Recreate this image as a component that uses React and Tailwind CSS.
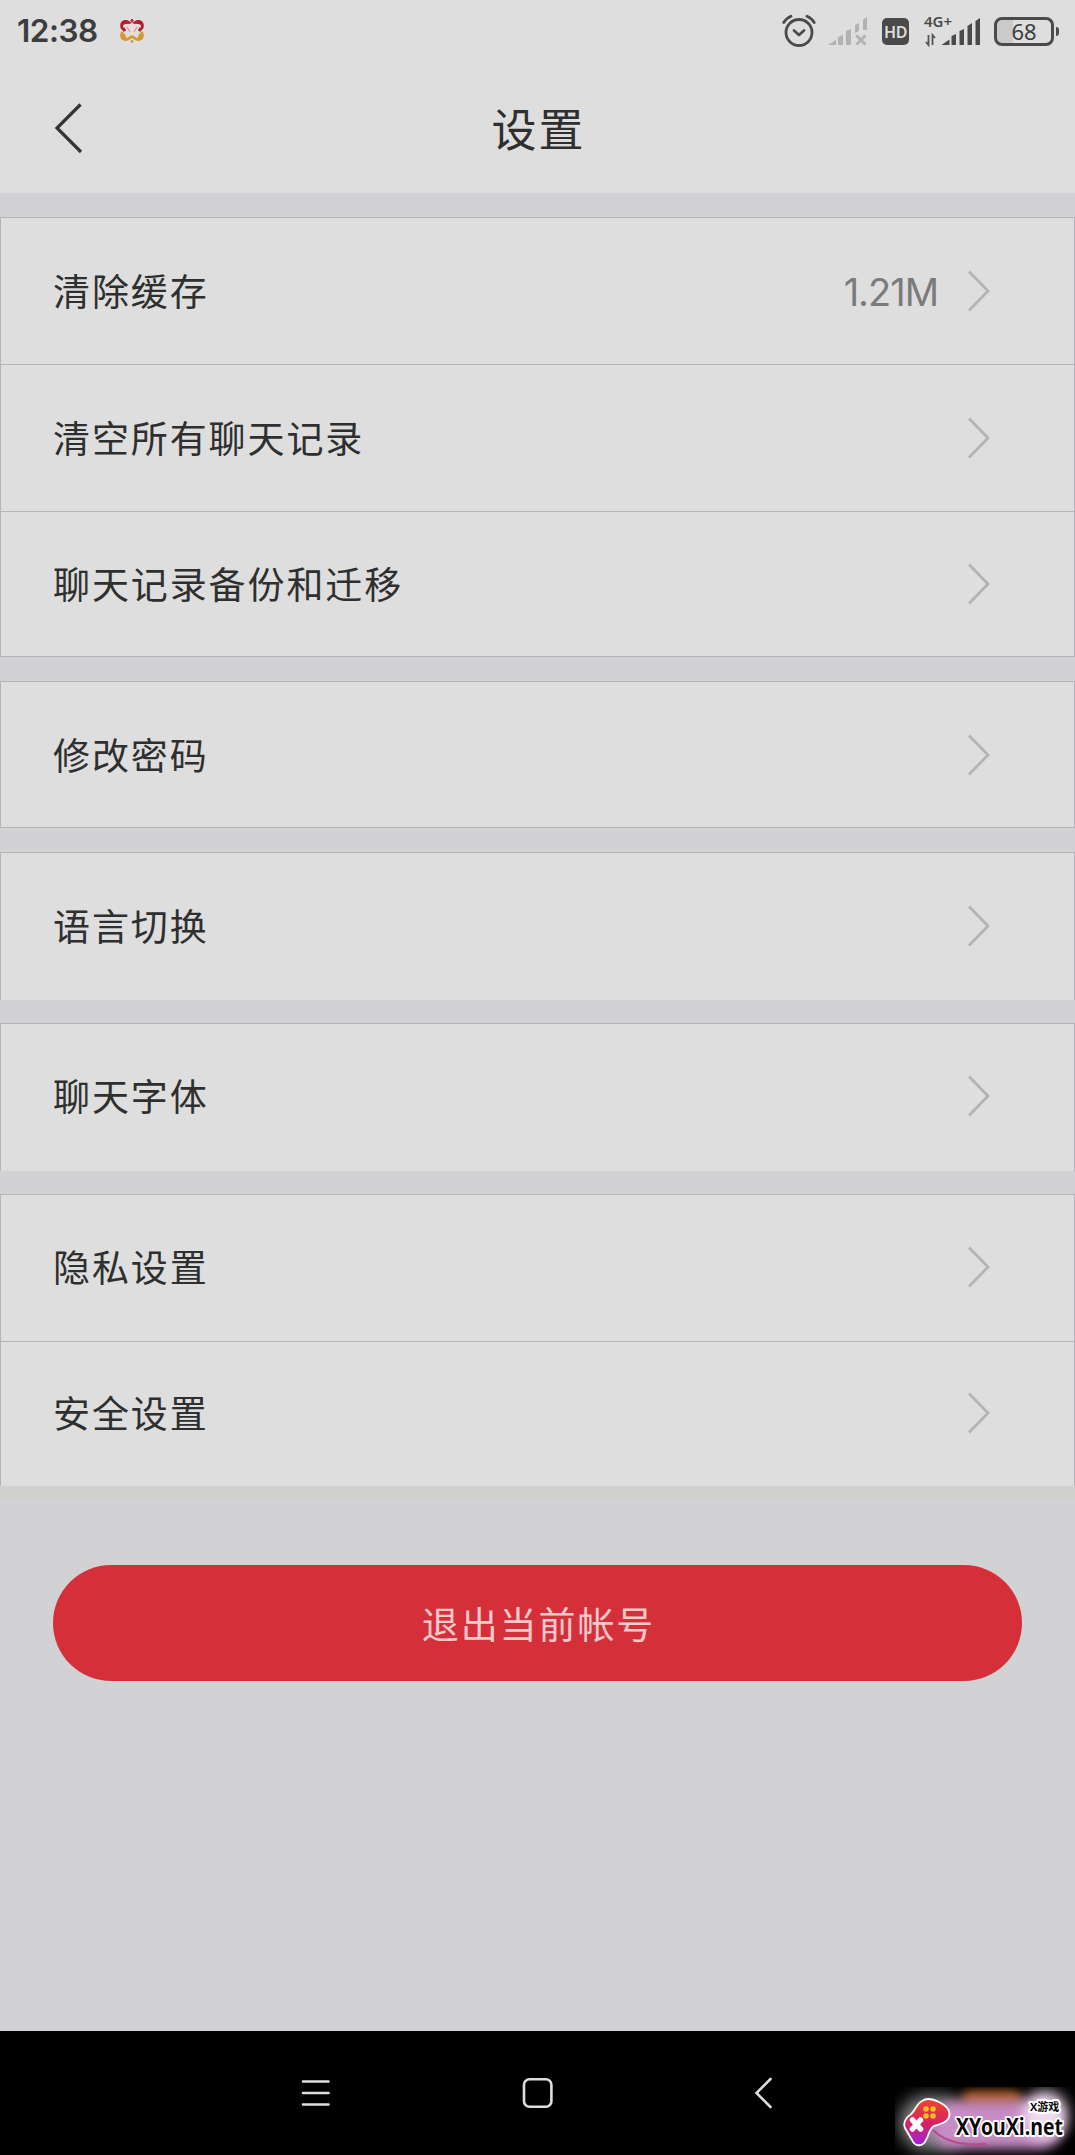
import React from 'react';

const groups = [
    {
        height: 'h-[440px]',
        gap: 'mt-6',
        border: 'border-y',
        rows: [
            { label: '清除缓存', value: '1.21M', size: 'h-[146px]' },
            { label: '清空所有聊天记录', size: 'h-[147px]' },
            { label: '聊天记录备份和迁移', size: 'flex-1' },
        ],
    },
    { height: 'h-[147px]', gap: 'mt-6', border: 'border-y', rows: [{ label: '修改密码', size: 'flex-1' }] },
    { height: 'h-[148px]', gap: 'mt-6', border: 'border-t', rows: [{ label: '语言切换', size: 'h-[145px]' }] },
    { height: 'h-[148px]', gap: 'mt-[23px]', border: 'border-t', rows: [{ label: '聊天字体', size: 'h-[143px]' }] },
    {
        height: 'h-[292px]',
        gap: 'mt-[23px]',
        border: 'border-t',
        rows: [
            { label: '隐私设置', size: 'flex-1 pb-[2px]' },
            { label: '安全设置', size: 'flex-1 pb-px' },
        ],
    },
];

const AppBadge = () => (
    <svg width="26" height="24" viewBox="0 0 26 24" fill="none">
        <path d="M2 10C-1 3 5-1 10 2l3 2 3-2c5-3 11 1 8 8l-3 2 1-5c-1-3-5-3-7-1l-2 2-2-2C9 4 5 4 4 7l1 5z" fill="#b51f2c" />
        <path d="M2 13c-3 7 3 11 8 8l3-2 3 2c5 3 11-1 8-8l-3-1 1 4c-1 3-5 4-7 1l-2-2-2 2c-2 3-6 2-7-1l1-4z" fill="#d29a35" />
        <path d="M13 4C9 5 5 8 8 12l5 5 5-5c3-4-1-7-5-8z" fill="#ecdcda" />
        <path d="M4 4l5-1M22 4l-5-1M4 9l2 3M22 9l-2 3" stroke="#b51f2c" strokeWidth="3" />
        <path d="M4 15l2 4M22 15l-2 4" stroke="#d29a35" strokeWidth="3" />
        <path d="M8 8l3 5M18 8l-3 5" stroke="#d79291" strokeWidth="1.2" />
        <circle cx="13" cy="1.5" r="1.5" fill="#b51f2c" />
        <circle cx="13" cy="22.5" r="1.4" fill="#d29a35" />
    </svg>
);

const AlarmIcon = () => (
    <svg width="34" height="34" viewBox="0 0 34 34" fill="none" stroke="#4b4b4b" strokeWidth="2.8" strokeLinecap="round">
        <circle cx="17" cy="18.5" r="13" />
        <path d="M1.8 8.5Q4 4.5 9 2.3M32.2 8.5Q30 4.5 25 2.3" />
        <path d="M12 16.5l5 4.5 5-4.5" strokeLinejoin="round" />
    </svg>
);

const WeakSignal = () => (
    <svg width="40" height="29" viewBox="0 0 40 29" fill="#b2b2b2">
        <path d="M0 28l8-5v5zM10 20l5-2v10h-5zM18 14l5-2v16h-5zM27 8l4-2v8l-4 2zM35 3l4-3v13h-4z" />
        <path d="M28.5 18.5l9 9M37.5 18.5l-9 9" stroke="#b2b2b2" strokeWidth="3" />
    </svg>
);

const Signal = () => (
    <svg width="57" height="31" viewBox="0 0 57 31" fill="#4a4a4a">
        <path d="M5.5 18v10l-2.5-3M9.5 28V18l2.5 3" stroke="#555" strokeWidth="1.8" fill="none" />
        <path d="M18.5 28l8-5.5V28zM28.5 19l4.500-2v11h-4.500zM36.500 14l4.500-2v16h-4.500zM44.500 9l4.500-3v22h-4.500zM52.500 4l4.500-3v27h-4.500z" />
    </svg>
);

const StatusBar = () => (
    <div className="flex h-16 items-start justify-between pl-[17px] pr-4">
        <div className="flex items-center pt-[11px]">
            <span className="w-[102px] text-[31.5px] leading-10 font-semibold tracking-[-0.5px] text-[#3d3d3d]">12:38</span>
            <AppBadge />
        </div>
        <div className="flex items-start">
            <div className="mt-[14px] mr-3"><AlarmIcon /></div>
            <div className="mt-[17px] mr-[14px]"><WeakSignal /></div>
            <span className="mt-[18px] mr-[14px] flex h-[27px] w-[27px] items-center justify-center rounded-[5px] bg-[#4a4a4a] font-['Noto_Sans'] text-[16px] font-semibold tracking-[-0.5px] text-[#dedede]">
                HD
            </span>
            <div className="relative mt-[17px] mr-[14px]">
                <Signal />
                <span className="absolute -top-[3px] left-px font-['Noto_Sans'] text-[15px] leading-[14px] font-semibold text-[#4a4a4a]">
                    4G+
                </span>
            </div>
            <div className="mt-[17px] flex items-center">
                <div className="flex h-[29px] w-[60px] items-center justify-center rounded-[8px] border-[3px] border-[#4a4a4a] bg-[linear-gradient(to_right,#cacaca_16px,#dedede_16px)] font-['Noto_Sans'] text-[22px] text-[#3d3d3d]">
                    68
                </div>
                <div className="ml-0.5 h-[9px] w-[3px] rounded-r bg-[#4a4a4a]" />
            </div>
        </div>
    </div>
);

const Row = ({ label, value, size, divider }) => (
    <div className={`flex items-center pl-[52px] pr-[84px] ${size} ${divider ? 'border-t border-[#b4b4b6]' : ''}`}>
        <span className="flex-1 pt-1 text-[37px] leading-[54px] tracking-[1.9px] text-[#2f2f2f]">{label}</span>
        {value && <span className="mr-[29px] pt-0.5 text-[38px] leading-[54px] tracking-[-1px] text-[#7b7b7b]">{value}</span>}
        <svg width="23" height="42" viewBox="0 0 23 42" fill="none" stroke="#b4b4b4" strokeWidth="2.8">
            <path d="M2 1.5l19 19.500L2 40.500" />
        </svg>
    </div>
);

const Watermark = () => (
    <div className="absolute right-0 bottom-0 h-[68px] w-[180px]">
        <div className="absolute inset-0 overflow-hidden">
            <div className="absolute top-2 left-1 h-14 w-[68px] rounded-full bg-white/50 blur-[8px]" />
            <div className="absolute top-[3px] left-[66px] h-5 w-[62px] rounded-full bg-[#a65a28] blur-[5px]" />
            <div className="absolute top-[14px] left-9 h-[48px] w-[132px] rounded-full bg-[#c88cc6] blur-[6px]" />
            <div className="absolute top-1 right-2 h-12 w-11 rounded-full bg-[#f0dcf0] blur-[7px]" />
        </div>
        <svg className="absolute top-0 left-0 overflow-visible" width="180" height="68" viewBox="0 0 180 68">
            <defs>
                <linearGradient id="padFill" x1="0" y1="0" x2="0" y2="1">
                    <stop offset="0" stopColor="#e9452c" />
                    <stop offset="0.5" stopColor="#d92460" />
                    <stop offset="1" stopColor="#9e20df" />
                </linearGradient>
            </defs>
            <path d="M38 43C50 55 67 59 91 57" fill="none" stroke="#b94b8c" strokeWidth="2" />
            <path
                d="M27 14C31 11 38 12 44 15C52 19 56 24 54 30C52 36 45 37 39 39C34 42 34 48 31 53C28 60 20 60 17 53L10 41C8 37 10 31 15 28C20 25 21 17 27 14Z"
                fill="url(#padFill)"
                stroke="#fff"
                strokeWidth="1.8"
            />
            <path d="M17.5 33l8 9M25.5 33l-8 9" stroke="#fff" strokeWidth="5.5" strokeLinecap="round" />
            <g fill="#ffbd20">
                <circle cx="31" cy="22" r="2.8" />
                <circle cx="38" cy="22" r="2.8" />
                <circle cx="31" cy="29" r="2.8" />
                <circle cx="38" cy="29" r="2.8" />
            </g>
            <g fill="#080808" stroke="#fff" strokeWidth="4" strokeLinejoin="round" paintOrder="stroke" fontWeight="700">
                <text x="135" y="24" fontSize="11" fontFamily="'Open Sans', 'Noto Sans CJK SC', sans-serif">X游戏</text>
                <text x="61" y="48" fontSize="24" textLength="107" lengthAdjust="spacingAndGlyphs" fontFamily="'Open Sans', sans-serif">XYouXi.net</text>
            </g>
        </svg>
    </div>
);

const NavBar = () => (
    <div className="relative h-[124px] bg-black">
        <div className="flex items-center pt-[45px] pl-[300px]">
            <svg width="32" height="34" viewBox="0 0 32 34" stroke="#dedede" strokeWidth="2.6" strokeLinecap="round">
                <path d="M3 5.5h25.5M3 17h25.5M3 28.5h25.5" />
            </svg>
            <svg className="ml-[189px]" width="34" height="34" viewBox="0 0 34 34" fill="none" stroke="#dedede" strokeWidth="2.6">
                <rect x="3" y="3.3" width="27.4" height="27.4" rx="5.5" />
            </svg>
            <svg className="ml-[198px]" width="22" height="34" viewBox="0 0 22 34" fill="none" stroke="#dedede" strokeWidth="2.6" strokeLinecap="round">
                <path d="M17.5 3L3.5 17l14 14" />
            </svg>
        </div>
        <Watermark />
    </div>
);

const App = () => {
    return (
        <div className="flex h-[2155px] w-[1075px] flex-col bg-[#d2d2d5] font-['Inter','Noto_Sans_CJK_SC',sans-serif]">
            <header className="h-[193px] shrink-0 bg-[#dedede]">
                <StatusBar />
                <div className="grid h-[129px] grid-cols-3 items-start">
                    <svg className="mt-[38px] ml-[53px]" width="32" height="54" viewBox="0 0 32 54" fill="none" stroke="#343434" strokeWidth="3.2">
                        <path d="M27.5 2.5L4 26l24 24" />
                    </svg>
                    <h1 className="mt-[34px] pl-[2px] text-center text-[45px] leading-[66px] tracking-[2px] text-[#2f2f2f]">设置</h1>
                </div>
            </header>

            <main className="flex-1">
                {groups.map((group) => (
                    <section
                        key={group.rows[0].label}
                        className={`flex flex-col border-x border-[#b4b4b6] bg-[#dedede] ${group.border} ${group.height} ${group.gap}`}
                    >
                        {group.rows.map((row, i) => (
                            <Row key={row.label} {...row} divider={i > 0} />
                        ))}
                    </section>
                ))}
                <div className="h-[14px] bg-[#d0d0cf]" />
                <button
                    type="button"
                    className="mt-[65px] ml-[53px] flex h-[116px] w-[969px] items-center justify-center rounded-full bg-[#d5303a] pt-[5px] pl-[2px] text-[37px] tracking-[1.9px] text-[#f3c9cd]"
                >
                    退出当前帐号
                </button>
            </main>

            <NavBar />
        </div>
    );
};

export default App;
